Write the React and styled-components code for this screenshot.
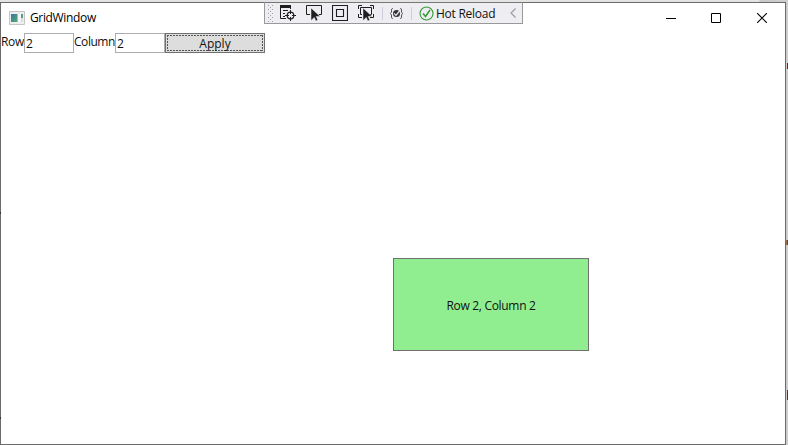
import React from 'react';
import styled, { createGlobalStyle } from 'styled-components';

const GlobalStyle = createGlobalStyle`
  * { box-sizing: border-box; }
  body { margin: 0; overflow: hidden; background: #cfcfcf; }
  svg { display: block; flex: none; }
`;

const Desktop = styled.div`
  position: relative;
  display: flex;
  width: 788px;
  height: 445px;
  padding-top: 2px;
  background: linear-gradient(90deg, #e3e3e3 759px, #c9c9c9 760px, #cecece 788px);
  font: 12px/16px 'Open Sans', 'Noto Sans', sans-serif;
  color: #111;
`;

const WindowFrame = styled.main`
  display: flex;
  flex-direction: column;
  width: 786px;
  height: 443px;
  border: 1px solid #6b6b6b;
  background: #fff;
`;

const Backdrop = styled.span`
  position: absolute;
  left: ${(p) => p.$x}px;
  top: ${(p) => p.$y}px;
  width: ${(p) => p.$w || 1}px;
  height: ${(p) => p.$h}px;
  background: ${(p) => p.$color};
`;

const TitleBar = styled.header`
  display: flex;
  align-items: center;
  height: 30px;
  padding-left: 8px;
`;

const Title = styled.h1`
  flex: 1;
  margin: 0 0 0 5px;
  font-size: 12px;
  font-weight: 400;
  letter-spacing: ${(p) => p.$track}px;
  color: #000;
`;

const CaptionButton = styled.button`
  display: grid;
  place-items: center;
  width: ${(p) => p.$w || 45}px;
  height: 28px;
  padding: 0;
  border: 0;
  background: transparent;
`;

const Controls = styled.form`
  display: flex;
  height: 20px;
`;

const Label = styled.label`
  width: ${(p) => p.$w}px;
  line-height: 18px;
  letter-spacing: ${(p) => p.$track}px;
  white-space: nowrap;
`;

const Field = styled.input`
  width: ${(p) => p.$w}px;
  height: 20px;
  padding: 0 1px 0 1px;
  border: 1px solid #abadb3;
  border-radius: 0;
  outline: 0;
  background: #fff;
  font: inherit;
  color: #111;
`;

const ApplyButton = styled.button`
  display: flex;
  width: 100px;
  height: 20px;
  padding: 1px;
  border: 1px solid #707070;
  background: #ddd;
  font: inherit;
  color: #111;
`;

const FocusRing = styled.span`
  display: grid;
  flex: 1;
  place-items: center;
  height: 16px;
  border: 1px solid transparent;
  background:
    repeating-linear-gradient(90deg, #555 0 2px, transparent 2px 3px) top / 100% 1px no-repeat border-box,
    repeating-linear-gradient(90deg, #555 0 2px, transparent 2px 3px) bottom / 100% 1px no-repeat border-box,
    repeating-linear-gradient(#555 0 2px, transparent 2px 3px) left / 1px 100% no-repeat border-box,
    repeating-linear-gradient(#555 0 2px, transparent 2px 3px) right / 1px 100% no-repeat border-box;
  line-height: 15px;
`;

const Board = styled.section`
  display: grid;
  flex: 1;
  grid-template: repeat(4, 93px) / repeat(4, 196px);
  align-content: end;
`;

const Cell = styled.div`
  grid-area: 3 / 3;
  display: grid;
  place-items: center;
  padding-top: 3px;
  border: 1px solid #707070;
  background: #90ee90;
  letter-spacing: -0.3px;
`;

const DebugBar = styled.nav`
  position: absolute;
  left: 264px;
  top: 2px;
  display: flex;
  align-items: center;
  width: 259px;
  height: 22px;
  border: 1px solid #999;
  border-top-color: #777;
  background: #eeeef2;
`;

const Tool = styled.span`
  margin-left: ${(p) => p.$gap}px;
`;

const Separator = styled.i`
  width: 1px;
  height: 13px;
  margin-left: ${(p) => p.$gap}px;
  background: #ccceDB;
`;

const HotReload = styled.span`
  width: 61px;
  margin: 1px 0 0 2px;
  white-space: nowrap;
  letter-spacing: -0.26px;
`;

const Cursor = () => (
  <path d="M5 3v12.500l3.300-3 1.500 3.500 2-1-1.600-3.500h4z" fill="#1e1e1e" stroke="#eeeef2" strokeWidth=".5" />
);

const AppIcon = () => (
  <svg width="16" height="14" viewBox="0 0 16 14">
    <defs>
      <linearGradient id="pane" x2="1" y2="1">
        <stop stopColor="#3977a5" />
        <stop offset="1" stopColor="#4faa70" />
      </linearGradient>
    </defs>
    <path d="M.5 .5h15v13H.5z" fill="#eee" stroke="#c4c4c4" />
    <path d="M2 3h6.500v8H2z" fill="url(#pane)" />
    <path d="M9.500 3h2v8h-2z" fill="#fafafa" />
    <path d="M12 3h2v4h-2z" fill="#5c9f80" />
    <path d="M12 7h2v4h-2z" fill="#dcdcdc" />
  </svg>
);

const Grip = () => (
  <svg width="5" height="17" viewBox="0 0 5 17" fill="#a0a0a4">
    {Array.from({ length: 5 }, (_, i) => (
      <React.Fragment key={i}>
        <path d={`M0 ${i * 4}h1v1H0zM4 ${i * 4}h1v1H4z`} />
        {i < 4 && <path d={`M2 ${i * 4 + 2}h1v1H2z`} />}
      </React.Fragment>
    ))}
  </svg>
);

const LiveTreeIcon = () => (
  <svg width="16" height="16" viewBox="0 0 16 16" fill="none" stroke="#1e1e1e">
    <path d="M0 0h11v3H0z" fill="#1e1e1e" stroke="none" />
    <path d="M.5 2v11.500H6M10.500 2v2M3 5.500h5M3 8.500h2M3 11.500h2" />
    <circle cx="10.500" cy="10.500" r="3.300" strokeWidth="1.200" />
    <path d="M10.500 5v4M10.500 12v4M5 10.500h4M12 10.500h4" />
  </svg>
);

const SelectIcon = () => (
  <svg width="16" height="16" viewBox="0 0 16 16">
    <path d="M4 9.500H.5v-9h15v9H13" fill="none" stroke="#1e1e1e" />
    <Cursor />
  </svg>
);

const AdornersIcon = () => (
  <svg width="16" height="16" viewBox="0 0 16 16" fill="none" stroke="#1e1e1e">
    <path d="M.5 .5h15v15H.5zM4.500 4.500h7v7h-7z" strokeWidth="1.100" />
  </svg>
);

const TrackIcon = () => (
  <svg width="16" height="16" viewBox="0 0 16 16">
    <path d="M.5 4V.5H4M12 .5h3.500V4M15.500 9v3.500H12M4 12.500H.5V9M4 9.500H2.500v-7h11v7H12" fill="none" stroke="#1e1e1e" />
    <Cursor />
  </svg>
);

const BindingIcon = () => (
  <svg width="13" height="11" viewBox="0 0 13 11" fill="none" stroke="#555">
    <path d="M3 .5H2.500Q1.500.5 1.500 2v2L.5 5.500l1 1.500v2q0 1.500 1 1.500H3M10 .5h.5q1 0 1 1.500v2l1 1.500-1 1.500v2q0 1.500-1 1.500H10" />
    <circle cx="6.500" cy="5.500" r="3.500" fill="#333" stroke="none" />
    <path d="M4 5.300 6 7.300l3.500-4.300" stroke="#eeeef2" strokeWidth="1.200" />
  </svg>
);

const CheckIcon = () => (
  <svg width="15" height="15" viewBox="0 0 15 15" fill="none" stroke="#339b33">
    <circle cx="7.500" cy="7.500" r="6.500" strokeWidth="1.100" />
    <path d="m4 7.500 2.500 3L11 4" strokeWidth="1.500" />
  </svg>
);

const ChevronIcon = () => (
  <svg width="6" height="10" viewBox="0 0 6 10" fill="none" stroke="#999">
    <path d="M5.500.5 1 5l4.500 4.500" strokeWidth="1.100" />
  </svg>
);

export default function App() {
  return (
    <>
      <GlobalStyle />
      <Desktop>
        <WindowFrame>
          <TitleBar>
            <AppIcon />
            <Title $track={-0.35}>GridWindow</Title>
            <CaptionButton aria-label="Minimize">
              <svg width="10" height="10"><path d="M0 5.500h10" stroke="#000" /></svg>
            </CaptionButton>
            <CaptionButton aria-label="Maximize">
              <svg width="10" height="10"><path d="M.5 .5h9v9h-9z" fill="none" stroke="#000" /></svg>
            </CaptionButton>
            <CaptionButton aria-label="Close" $w={47}>
              <svg width="10" height="10"><path d="m0 0 10 10M10 0 0 10" stroke="#000" strokeWidth="1.100" /></svg>
            </CaptionButton>
          </TitleBar>
          <Controls onSubmit={(e) => e.preventDefault()}>
            <Label $w={23} $track={-0.3}>Row</Label>
            <Field $w={50} defaultValue="2" aria-label="Row" />
            <Label $w={41} $track={-0.45}>Column</Label>
            <Field $w={50} defaultValue="2" aria-label="Column" />
            <ApplyButton><FocusRing>Apply</FocusRing></ApplyButton>
          </Controls>
          <Board><Cell>Row 2, Column 2</Cell></Board>
        </WindowFrame>
        <Backdrop $x={787} $y={63} $h={6} $color="#682626" />
        <Backdrop $x={786} $y={240} $w={2} $h={5} $color="linear-gradient(90deg, #c98650, #30304e)" />
        <Backdrop $x={787} $y={390} $h={10} $color="#682626" />
        <Backdrop $x={0} $y={212} $h={2} $color="#333" />
        <Backdrop $x={0} $y={417} $h={2} $color="#333" />
        <DebugBar aria-label="Debug tools">
          <Tool $gap={3}><Grip /></Tool>
          <Tool $gap={7}><LiveTreeIcon /></Tool>
          <Tool $gap={10}><SelectIcon /></Tool>
          <Tool $gap={10}><AdornersIcon /></Tool>
          <Tool $gap={10}><TrackIcon /></Tool>
          <Separator $gap={8} />
          <Tool $gap={7}><BindingIcon /></Tool>
          <Separator $gap={8} />
          <Tool $gap={7}><CheckIcon /></Tool>
          <HotReload>Hot Reload</HotReload>
          <Tool $gap={13}><ChevronIcon /></Tool>
        </DebugBar>
      </Desktop>
    </>
  );
}
